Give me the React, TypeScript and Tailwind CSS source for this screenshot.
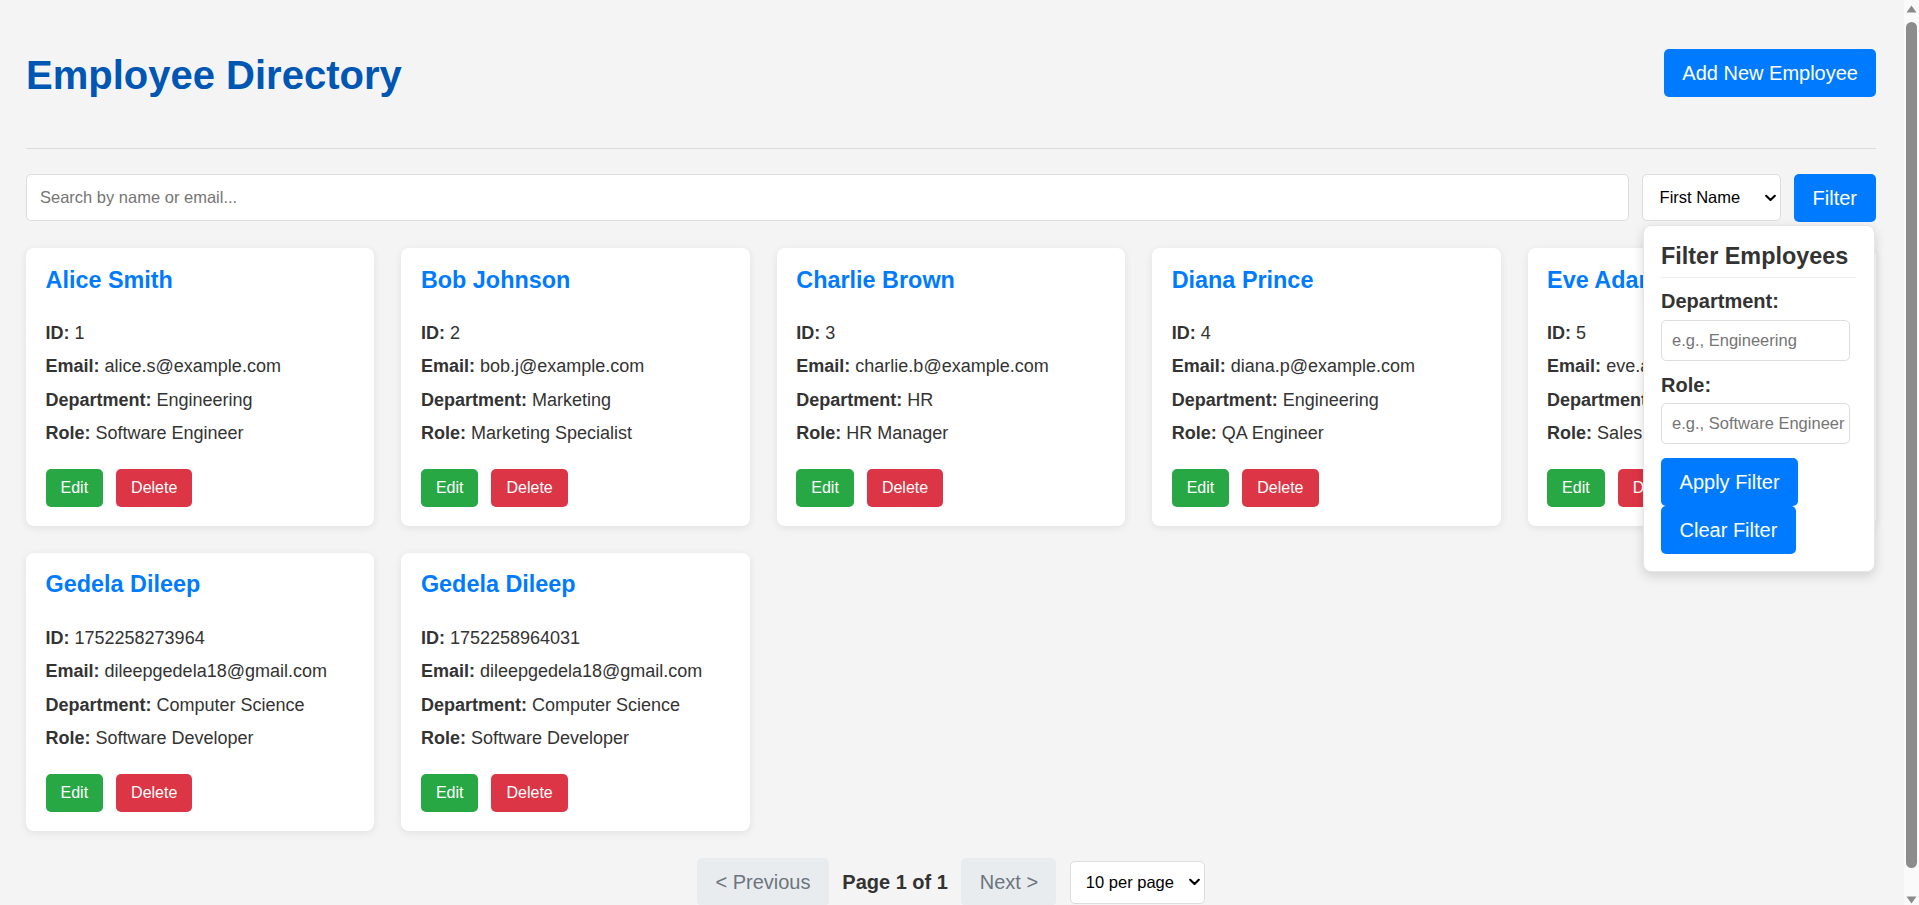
import React from "react";

type Emp = { name: string; id: string; email: string; dept: string; role: string };

const employees: Emp[] = [
  { name: "Alice Smith", id: "1", email: "alice.s@example.com", dept: "Engineering", role: "Software Engineer" },
  { name: "Bob Johnson", id: "2", email: "bob.j@example.com", dept: "Marketing", role: "Marketing Specialist" },
  { name: "Charlie Brown", id: "3", email: "charlie.b@example.com", dept: "HR", role: "HR Manager" },
  { name: "Diana Prince", id: "4", email: "diana.p@example.com", dept: "Engineering", role: "QA Engineer" },
  { name: "Eve Adams", id: "5", email: "eve.a@example.com", dept: "Sales", role: "Sales Representative" },
  { name: "Gedela Dileep", id: "1752258273964", email: "dileepgedela18@gmail.com", dept: "Computer Science", role: "Software Developer" },
  { name: "Gedela Dileep", id: "1752258964031", email: "dileepgedela18@gmail.com", dept: "Computer Science", role: "Software Developer" },
];

function Chevron() {
  return (
    <svg width="11" height="7" viewBox="0 0 11 7" className="pointer-events-none absolute right-[5px] top-1/2 -translate-y-1/2">
      <path d="M1.2 1.2 L5.5 5.5 L9.8 1.2" fill="none" stroke="#000" strokeWidth="2.1" strokeLinecap="round" strokeLinejoin="round" />
    </svg>
  );
}

function Card({ e }: { e: Emp }) {
  return (
    <div className="bg-white rounded-[8px] shadow-[0_2px_8px_rgba(0,0,0,0.08)] pt-[18.5px] px-[19.5px] pb-[19px]">
      <h3 className="text-[23.4px] font-bold text-[#007bff] leading-[27px] whitespace-nowrap overflow-hidden">{e.name}</h3>
      <div className="mt-[29.5px] flex flex-col gap-[12.4px] text-[18px] leading-[21px] text-[#333]">
        <p className="whitespace-nowrap"><strong>ID:</strong> {e.id}</p>
        <p className="whitespace-nowrap"><strong>Email:</strong> {e.email}</p>
        <p className="whitespace-nowrap"><strong>Department:</strong> {e.dept}</p>
        <p className="whitespace-nowrap"><strong>Role:</strong> {e.role}</p>
      </div>
      <div className="mt-[24.8px] flex gap-[13px]">
        <button className="h-[38px] px-[15px] rounded-[5px] bg-[#28a745] text-white text-[16px]">Edit</button>
        <button className="h-[38px] px-[15px] rounded-[5px] bg-[#dc3545] text-white text-[16px]">Delete</button>
      </div>
    </div>
  );
}

function Scrollbar() {
  return (
    <div className="relative w-[15px] h-full shrink-0 bg-[#fafafa]">
      <svg width="11" height="8" viewBox="0 0 11 8" className="absolute left-[2px] top-[5px]">
        <path d="M5.5 0.5 L10.5 7.5 L0.5 7.5 Z" fill="#8a8a8a" />
      </svg>
      <div className="absolute left-[2px] right-[2px] top-[22px] bottom-[37px] rounded-full bg-[#8c8c8c]" />
      <svg width="11" height="8" viewBox="0 0 11 8" className="absolute left-[2px] bottom-[1px]">
        <path d="M0.5 0.5 L10.5 0.5 L5.5 7.5 Z" fill="#8a8a8a" />
      </svg>
    </div>
  );
}

export default function App() {
  return (
    <div className="h-[905px] flex overflow-hidden bg-[#f4f4f4] text-[#333] font-['Liberation_Sans',Arial,sans-serif]">
      <main className="flex-1 min-w-0 h-full overflow-hidden">
        <div className="pl-[26px] pr-[28px] pt-[49px] pb-[40px]">
          <header className="flex items-center justify-between h-[48px]">
            <h1 className="text-[40px] font-bold text-[#0056b3] leading-[46px] translate-y-[2px]">Employee Directory</h1>
            <button className="h-[48px] px-[18px] rounded-[5px] bg-[#007bff] text-white text-[20px]">Add New Employee</button>
          </header>
          <div className="mt-[51px] h-px bg-[#dddddd]" />

          <div className="mt-[25px] flex items-start gap-[13px]">
            <input
              type="text"
              placeholder="Search by name or email..."
              className="flex-1 h-[47px] bg-white border border-[#dddddd] rounded-[5px] pl-[13px] text-[16.5px] placeholder:text-[#757575] outline-none"
            />
            <div className="relative flex items-start gap-[13px]">
              <div className="relative w-[139px] h-[47px]">
                <select className="appearance-none w-full h-full bg-white border border-[#dddddd] rounded-[5px] pl-[17px] text-[16.5px] text-black outline-none">
                  <option>First Name</option>
                </select>
                <Chevron />
              </div>
              <button className="h-[48px] px-[19px] rounded-[5px] bg-[#007bff] text-white text-[20px]">Filter</button>

              <div className="absolute top-[51px] left-[1px] right-[1px] z-10 bg-white rounded-[8px] border border-[#e6e6e6] shadow-[0_4px_12px_rgba(0,0,0,0.15)] pt-[17px] pl-[17.5px] pr-[18px] pb-[17px]">
                <h3 className="text-[23.4px] font-bold leading-[27px] pb-[7px] border-b border-[#eeeeee] text-[#333] whitespace-nowrap">Filter Employees</h3>
                <label className="block mt-[12px] text-[20px] font-bold leading-[23px]">Department:</label>
                <input
                  type="text"
                  placeholder="e.g., Engineering"
                  className="mt-[6.5px] block w-[189px] h-[41px] border border-[#dddddd] rounded-[5px] pl-[10px] text-[16.5px] placeholder:text-[#757575] outline-none"
                />
                <label className="block mt-[13px] text-[20px] font-bold leading-[23px]">Role:</label>
                <input
                  type="text"
                  placeholder="e.g., Software Engineer"
                  className="mt-[6.5px] block w-[189px] h-[41px] border border-[#dddddd] rounded-[5px] pl-[10px] text-[16.5px] placeholder:text-[#757575] outline-none"
                />
                <div className="mt-[13.7px] flex flex-col items-start">
                  <button className="h-[48px] px-[18.5px] rounded-[5px] bg-[#007bff] text-white text-[20px]">Apply Filter</button>
                  <button className="h-[48px] px-[18.5px] rounded-[5px] bg-[#007bff] text-white text-[20px]">Clear Filter</button>
                </div>
              </div>
            </div>
          </div>

          <div className="mt-[26px] grid grid-cols-5 gap-[27px]">
            {employees.map((e, i) => (
              <Card key={i} e={e} />
            ))}
          </div>

          <div className="mt-[27.5px] flex items-center justify-center gap-[13.5px]">
            <button className="h-[48px] px-[18.3px] rounded-[5px] bg-[#e9ecef] text-[#6c757d] text-[20px]">&lt; Previous</button>
            <span className="text-[20px] font-bold text-[#333]">Page 1 of 1</span>
            <button className="h-[48px] px-[18.3px] rounded-[5px] bg-[#e9ecef] text-[#6c757d] text-[20px]">Next &gt;</button>
            <div className="relative w-[135px] h-[43px]">
              <select className="appearance-none w-full h-full bg-white border border-[#dddddd] rounded-[5px] pl-[15px] text-[16.5px] text-black outline-none">
                <option>10 per page</option>
              </select>
              <Chevron />
            </div>
          </div>
        </div>
      </main>
      <Scrollbar />
    </div>
  );
}
